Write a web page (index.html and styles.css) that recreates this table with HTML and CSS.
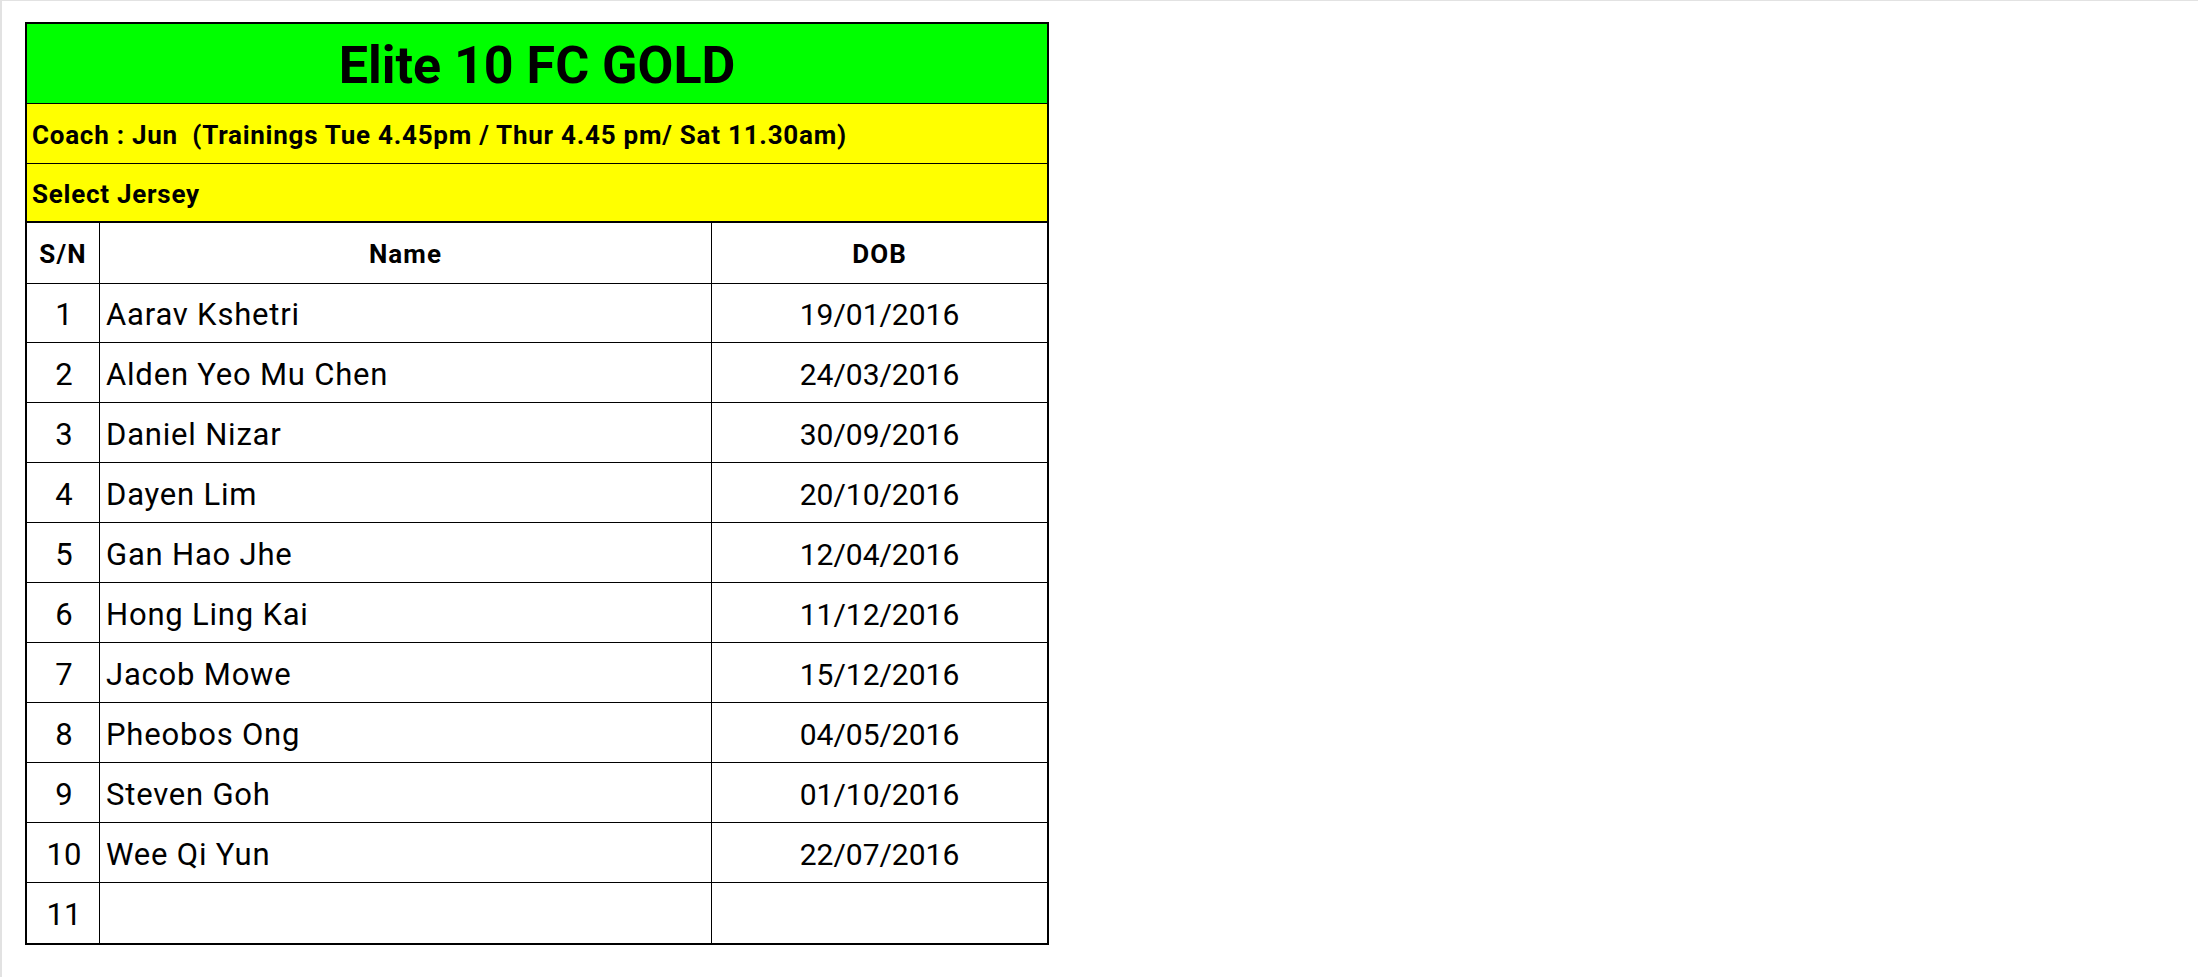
FILE: index.html
```html
<!DOCTYPE html>
<html lang="en">
<head>
<meta charset="utf-8">
<title>Elite 10 FC GOLD</title>
<link rel="stylesheet" href="styles.css">
</head>
<body>
<div class="page">
  <div class="sheet">
    <div class="band band-title">Elite 10 FC GOLD</div>
    <div class="band band-info">Coach : Jun&nbsp; (Trainings Tue 4.45pm / Thur 4.45 pm/ Sat 11.30am)</div>
    <div class="band band-info band-last">Select Jersey</div>
    <div class="grid">
      <div class="cell head sn">S/N</div>
      <div class="cell head name-h">Name</div>
      <div class="cell head dob">DOB</div>

      <div class="cell sn num">1</div><div class="cell name">Aarav Kshetri</div><div class="cell dob date">19/01/2016</div>
      <div class="cell sn num">2</div><div class="cell name">Alden Yeo Mu Chen</div><div class="cell dob date">24/03/2016</div>
      <div class="cell sn num">3</div><div class="cell name">Daniel Nizar</div><div class="cell dob date">30/09/2016</div>
      <div class="cell sn num">4</div><div class="cell name">Dayen Lim</div><div class="cell dob date">20/10/2016</div>
      <div class="cell sn num">5</div><div class="cell name">Gan Hao Jhe</div><div class="cell dob date">12/04/2016</div>
      <div class="cell sn num">6</div><div class="cell name">Hong Ling Kai</div><div class="cell dob date">11/12/2016</div>
      <div class="cell sn num">7</div><div class="cell name">Jacob Mowe</div><div class="cell dob date">15/12/2016</div>
      <div class="cell sn num">8</div><div class="cell name">Pheobos Ong</div><div class="cell dob date">04/05/2016</div>
      <div class="cell sn num">9</div><div class="cell name">Steven Goh</div><div class="cell dob date">01/10/2016</div>
      <div class="cell sn num">10</div><div class="cell name">Wee Qi Yun</div><div class="cell dob date">22/07/2016</div>
      <div class="cell sn num last">11</div><div class="cell name last"></div><div class="cell dob date last"></div>
    </div>
  </div>
</div>
</body>
</html>
```
FILE: styles.css
```css
html, body {
  margin: 0;
  padding: 0;
  background: #ffffff;
}

body {
  border-top: 1px solid #e2e2e2;
  border-left: 2px solid #e2e2e2;
  min-height: 977px;
  box-sizing: border-box;
  font-family: Roboto, "Liberation Sans", sans-serif;
  color: #000;
}

.page {
  padding: 21px 0 0 23px;
}

.sheet {
  width: 1024px;
  border: 2px solid #000;
  box-sizing: border-box;
}

.band {
  display: flex;
  align-items: center;
  box-sizing: border-box;
  border-bottom: 1px solid #000;
}

.band-title {
  height: 80px;
  background: #00ff00;
  justify-content: center;
  font-size: 52px;
  font-weight: 700;
  padding-top: 4px;
}

.band-info {
  height: 60px;
  background: #ffff00;
  font-size: 26px;
  font-weight: 700;
  letter-spacing: 0.75px;
  padding-left: 5px;
  padding-top: 2px;
}

.band-last {
  height: 59px;
  border-bottom-width: 2px;
}

.grid {
  display: grid;
  grid-template-columns: 73px 612px 335px;
  grid-auto-rows: 60px;
}

.cell {
  display: flex;
  align-items: center;
  box-sizing: border-box;
  border-bottom: 1px solid #000;
  padding-top: 3px;
}

.cell.sn,
.cell.name,
.cell.name-h {
  border-right: 1px solid #000;
}

.cell.last {
  border-bottom: none;
}

.head {
  justify-content: center;
  font-size: 26px;
  font-weight: 700;
  letter-spacing: 1.1px;
  height: 61px;
  padding-top: 2px;
}

.num {
  justify-content: center;
  font-size: 31px;
  padding-left: 2px;
}

.name {
  font-size: 31px;
  letter-spacing: 0.8px;
  padding-left: 6px;
}

.date {
  justify-content: center;
  font-size: 30px;
}
```
